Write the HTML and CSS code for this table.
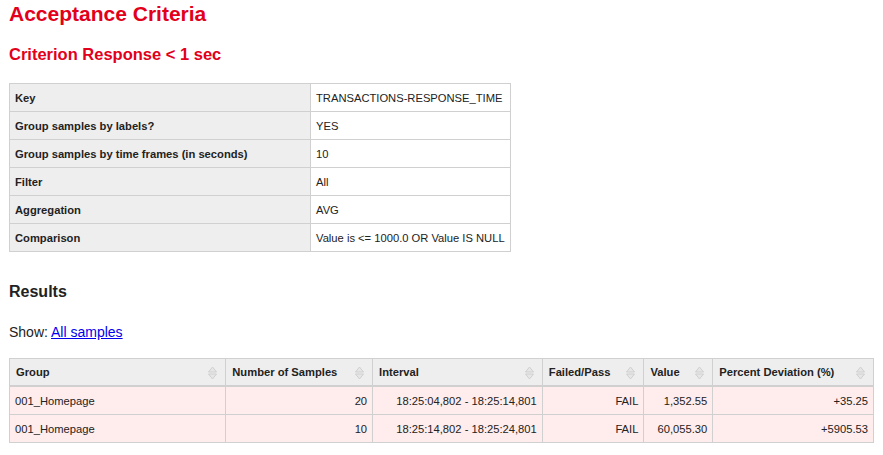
FILE: index.html
```html
<!DOCTYPE html>
<html>
<head>
<meta charset="utf-8">
<link rel="stylesheet" href="styles.css">
</head>
<body>
<h1 class="title">Acceptance Criteria</h1>
<h2 class="subtitle">Criterion Response &lt; 1 sec</h2>
<table class="info">
  <tr><th>Key</th><td>TRANSACTIONS-RESPONSE_TIME</td></tr>
  <tr><th>Group samples by labels?</th><td>YES</td></tr>
  <tr><th>Group samples by time frames (in seconds)</th><td>10</td></tr>
  <tr><th>Filter</th><td>All</td></tr>
  <tr><th>Aggregation</th><td>AVG</td></tr>
  <tr><th>Comparison</th><td>Value is &lt;= 1000.0 OR Value IS NULL</td></tr>
</table>
<h3 class="results-title">Results</h3>
<p class="show">Show: <a href="#">All samples</a></p>
<table class="results">
  <thead>
    <tr>
      <th class="c1"><span>Group</span><svg class="sort" viewBox="0 0 9 14"><path d="M4.5 1 L8.5 6 H0.5 Z"/><path d="M0.5 8 H8.5 L4.5 13 Z"/></svg></th>
      <th class="c2"><span>Number of Samples</span><svg class="sort" viewBox="0 0 9 14"><path d="M4.5 1 L8.5 6 H0.5 Z"/><path d="M0.5 8 H8.5 L4.5 13 Z"/></svg></th>
      <th class="c3"><span>Interval</span><svg class="sort" viewBox="0 0 9 14"><path d="M4.5 1 L8.5 6 H0.5 Z"/><path d="M0.5 8 H8.5 L4.5 13 Z"/></svg></th>
      <th class="c4"><span>Failed/Pass</span><svg class="sort" viewBox="0 0 9 14"><path d="M4.5 1 L8.5 6 H0.5 Z"/><path d="M0.5 8 H8.5 L4.5 13 Z"/></svg></th>
      <th class="c5"><span>Value</span><svg class="sort" viewBox="0 0 9 14"><path d="M4.5 1 L8.5 6 H0.5 Z"/><path d="M0.5 8 H8.5 L4.5 13 Z"/></svg></th>
      <th class="c6"><span>Percent Deviation (%)</span><svg class="sort" viewBox="0 0 9 14"><path d="M4.5 1 L8.5 6 H0.5 Z"/><path d="M0.5 8 H8.5 L4.5 13 Z"/></svg></th>
    </tr>
  </thead>
  <tbody>
    <tr class="fail">
      <td>001_Homepage</td><td class="num">20</td><td class="num">18:25:04,802 - 18:25:14,801</td><td class="num">FAIL</td><td class="num">1,352.55</td><td class="num">+35.25</td>
    </tr>
    <tr class="fail">
      <td>001_Homepage</td><td class="num">10</td><td class="num">18:25:14,802 - 18:25:24,801</td><td class="num">FAIL</td><td class="num">60,055.30</td><td class="num">+5905.53</td>
    </tr>
  </tbody>
</table>
</body>
</html>
```
FILE: styles.css
```css
body {
  margin: 0;
  padding: 0 9px;
  font-family: "Liberation Sans", Arial, sans-serif;
  color: #222;
  background: #fff;
}
.title {
  color: #e2001a;
  font-size: 21px;
  font-weight: bold;
  margin: 2px 0 0;
  line-height: 24px;
}
.subtitle {
  color: #e2001a;
  font-size: 16.5px;
  font-weight: bold;
  margin: 18px 0 0;
  line-height: 20px;
}
.info {
  border-collapse: collapse;
  margin-top: 19px;
  font-size: 11.2px;
}
.info th, .info td {
  border: 1px solid #d0d0d0;
  height: 27px;
  padding: 0 5px;
  text-align: left;
  color: #222;
}
.info th {
  background: #eeeeee;
  width: 290px;
  font-weight: bold;
}
.info td {
  width: 189px;
  background: #fff;
}
.results-title {
  font-size: 16px;
  font-weight: bold;
  margin: 30px 0 0;
  line-height: 20px;
  color: #222;
}
.show {
  font-size: 14px;
  margin: 21px 0 0;
  line-height: 18px;
}
.show a { color: #0000ee; }
.results {
  border-collapse: collapse;
  margin-top: 17px;
  width: 865px;
  font-size: 11.2px;
}
.results th {
  background: #eeeeee;
  border: 1px solid #d0d0d0;
  border-bottom: 2px solid #d0d0d0;
  height: 26px;
  padding: 0 6px;
  text-align: left;
  font-weight: bold;
  position: relative;
}
.results th span { display: inline-block; }
.sort {
  position: absolute;
  right: 8px;
  top: 7px;
  width: 9px;
  height: 14px;
}
.sort path {
  fill: #e6e6e6;
  stroke: #cfcfcf;
  stroke-width: 1;
}
.results td {
  border: 1px solid #d0d0d0;
  height: 27px;
  padding: 0 5px;
}
.results tr.fail td { background: #ffecec; }
.results td.num { text-align: right; }
.c1 { width: 205px; }
.c2 { width: 135px; }
.c3 { width: 158px; }
.c4 { width: 89px; }
.c5 { width: 56px; }
.c6 { width: 149px; }
```
